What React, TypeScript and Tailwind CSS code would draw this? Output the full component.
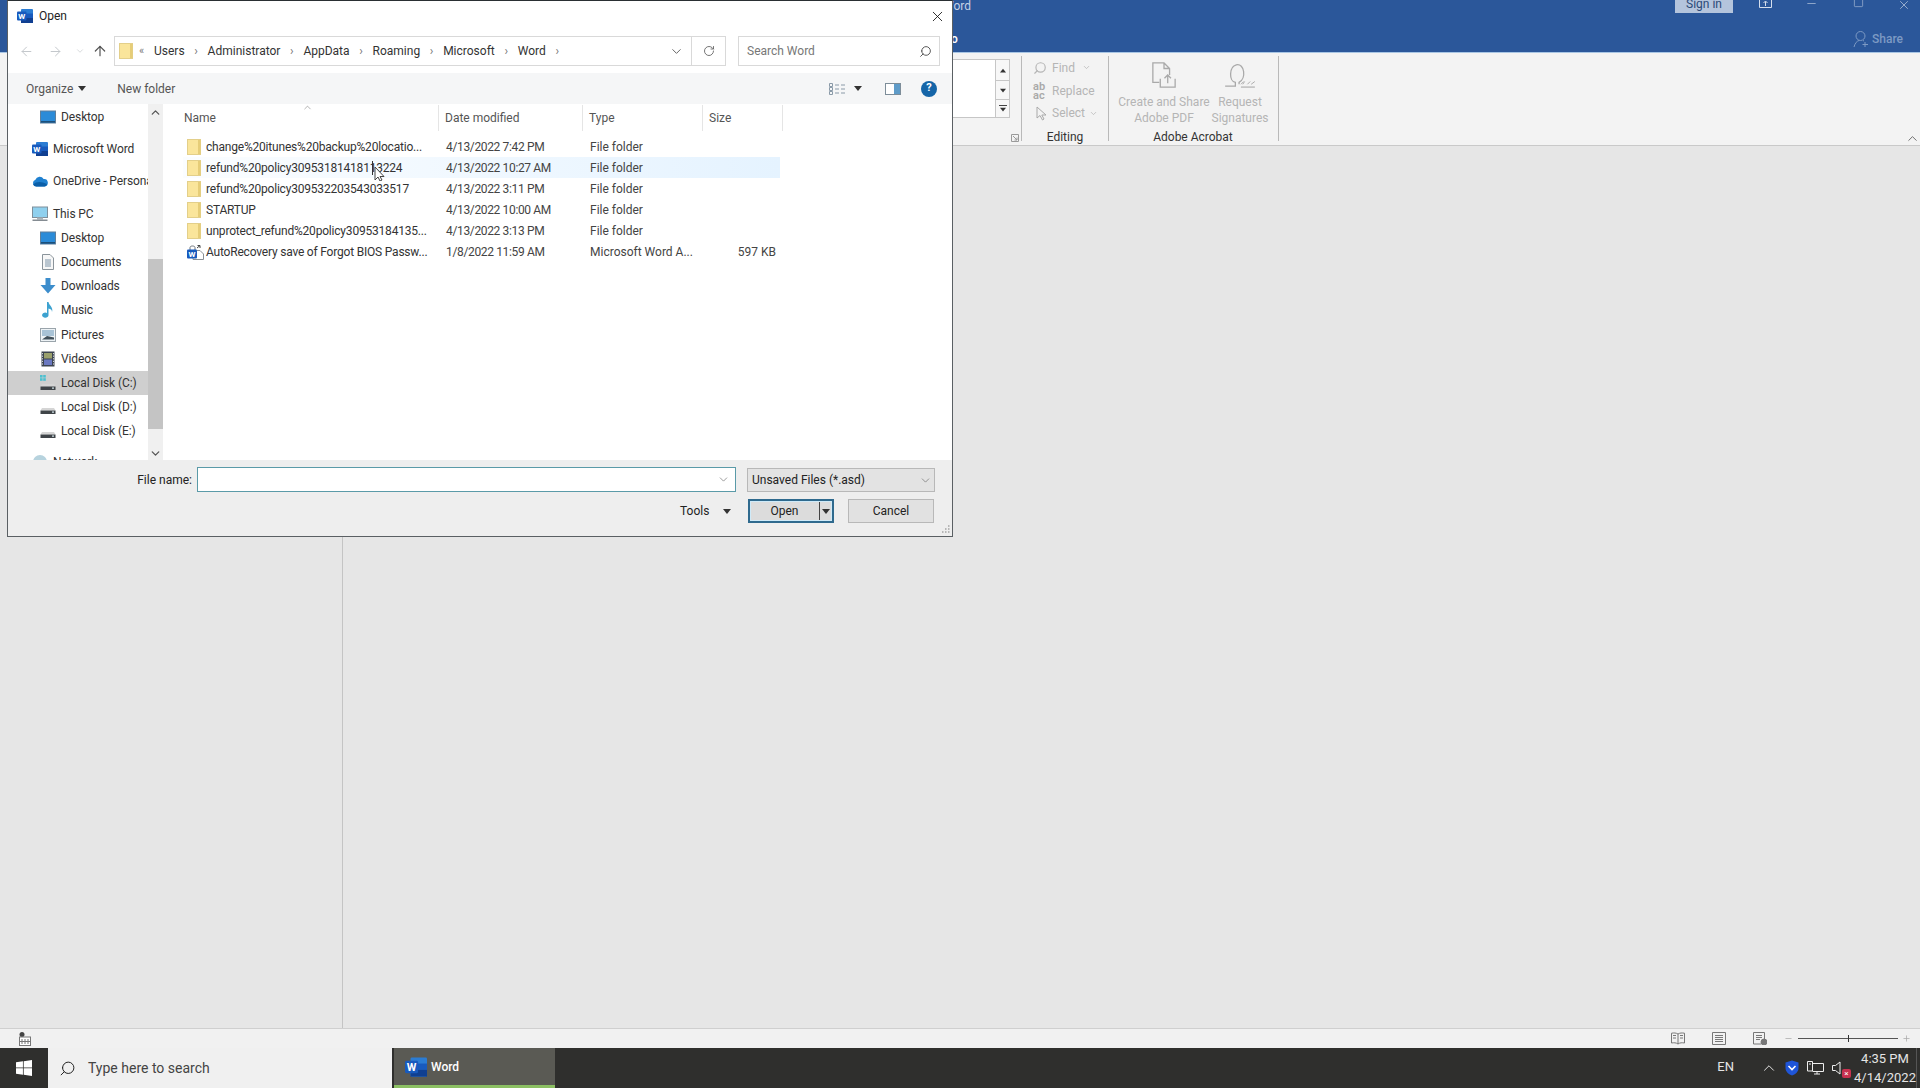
import { ArrowLeft, ArrowRight, ArrowUp, ChevronDown, ChevronUp, RotateCw, Search, X, Minus, Plus, Square } from 'lucide-react';
import type { ReactNode } from 'react';

const WordIcon = ({ size = 16 }: { size?: number }) => (
  <svg width={size} height={size} viewBox="0 0 16 16" className="shrink-0">
    <rect x="4" y="1" width="12" height="14" rx="1" fill="#2b7cd3" />
    <rect x="4" y="5.5" width="12" height="4.5" fill="#185abd" />
    <rect x="4" y="10" width="12" height="5" fill="#103f91" />
    <rect x="0" y="3.5" width="9.5" height="9" rx="1" fill="#185abd" />
    <text x="4.7" y="10.8" fontSize="8" fontWeight="700" fill="#fff" textAnchor="middle" fontFamily="Roboto, sans-serif">W</text>
  </svg>
);

const Folder = () => (
  <svg width="14" height="16" viewBox="0 0 14 16" className="shrink-0">
    <rect x="0.5" y="0.5" width="13" height="15" fill="#fae59b" stroke="#e3cf8a" />
    <rect x="11" y="1" width="2.5" height="14" fill="#e6cd78" />
  </svg>
);

const RecoveryIcon = () => (
  <svg width="17" height="16" viewBox="0 0 17 16" className="shrink-0">
    <path d="M9.5 6.5H13L16.5 10V15.5H6V12" fill="#fff" stroke="#8a8f94" />
    <path d="M10 4L13 1.5M13 1.5H10.5M13 1.5V4" fill="none" stroke="#444" />
    <path d="M3 6V3.5C3 1.5 8 1.5 8 3.5V6" fill="none" stroke="#6a7078" />
    <rect x="0" y="5.5" width="10" height="9" rx="1" fill="#185abd" />
    <text x="5" y="12.8" fontSize="8" fontWeight="700" fill="#fff" textAnchor="middle" fontFamily="Roboto, sans-serif">W</text>
  </svg>
);

const Desktop = () => (
  <svg width="16" height="14" viewBox="0 0 16 14" className="shrink-0">
    <rect x="0.5" y="1" width="15" height="12" fill="#2b8bd8" stroke="#5f7f9b" />
    <rect x="1" y="11" width="14" height="1.6" fill="#1c4f7a" />
  </svg>
);

const Disk = ({ win }: { win?: boolean }) => (
  <svg width="16" height="16" viewBox="0 0 16 16" className="shrink-0">
    {win && (
      <g fill="#4cc0d0">
        <rect x="0" y="0" width="2.6" height="2.6" />
        <rect x="3.2" y="0" width="2.6" height="2.6" />
        <rect x="0" y="3.2" width="2.6" height="2.6" />
        <rect x="3.2" y="3.2" width="2.6" height="2.6" />
      </g>
    )}
    <path d="M2 9 h12 l1.5 2.5 H0.5z" fill="#d5d5d5" />
    <rect x="0.5" y="11.5" width="15" height="3.5" fill="#3f4448" />
    <rect x="12" y="12.5" width="2" height="1.2" fill="#d8e8ee" />
  </svg>
);

const navIcons: Record<string, ReactNode> = {
  desktop: <Desktop />,
  word: <WordIcon />,
  cloud: (
    <svg width="16" height="12" viewBox="0 0 16 12" className="shrink-0">
      <path d="M4 11.5 A3.5 3.5 0 0 1 3.4 4.7 A4.5 4.5 0 0 1 11.6 4 A3.5 3.5 0 0 1 12.5 11.5z" fill="#1f80d0" />
      <path d="M1 9.5 Q6 5 15 9 Q14.5 11.5 12.5 11.5 H4 Q2 11.5 1 9.5z" fill="#0a5ea8" />
    </svg>
  ),
  pc: (
    <svg width="16" height="16" viewBox="0 0 16 16" className="shrink-0">
      <rect x="0.5" y="1" width="15" height="10.5" fill="#8fd0ee" stroke="#7e8f9b" />
      <rect x="5" y="11.5" width="6" height="2" fill="#a8b3ba" />
      <rect x="0.5" y="13.5" width="15" height="1.5" fill="#848c92" />
    </svg>
  ),
  doc: (
    <svg width="14" height="16" viewBox="0 0 14 16" className="shrink-0">
      <path d="M1.5 0.5 H9 L12.5 4 V15.5 H1.5z" fill="#f7f7f7" stroke="#8b949b" />
      <path d="M4 6h6M4 8h6M4 10h6M4 12h6" stroke="#7d94a8" />
    </svg>
  ),
  down: (
    <svg width="16" height="16" viewBox="0 0 16 16" className="shrink-0">
      <path d="M5.5 0 H10.5 V7 H15.5 L8 15.5 L0.5 7 H5.5z" fill="#3c8dcc" />
    </svg>
  ),
  music: (
    <svg width="14" height="16" viewBox="0 0 14 16" className="shrink-0">
      <path d="M6 0 H7.5 C8 3.5 12.5 5 11 10 C11 7.5 9.5 7 7.5 6.5 V13 A3.2 2.6 0 1 1 6 11z" fill="#3da2d0" />
    </svg>
  ),
  pic: (
    <svg width="16" height="14" viewBox="0 0 16 14" className="shrink-0">
      <rect x="0.5" y="0.5" width="15" height="13" fill="#eef3f6" stroke="#9aa4ab" />
      <rect x="2" y="2" width="12" height="6" fill="#a9c3d6" />
      <path d="M2 11.5 L7 8 L14 9.5 V11.5z" fill="#41505a" />
    </svg>
  ),
  video: (
    <svg width="14" height="16" viewBox="0 0 14 16" className="shrink-0">
      <rect x="0.5" y="0.5" width="13" height="15" fill="#3c4450" />
      <rect x="3" y="2" width="8" height="5.5" fill="#9aa06c" />
      <rect x="3" y="8.5" width="8" height="5.5" fill="#6a78c0" />
      <path d="M1.5 2v12M12.5 2v12" stroke="#d0d4da" strokeDasharray="1.2 1.4" />
    </svg>
  ),
  diskc: <Disk win />,
  disk: <Disk />,
  net: (
    <svg width="16" height="16" viewBox="0 0 16 16" className="shrink-0">
      <circle cx="8" cy="8" r="7" fill="#b7d3de" />
    </svg>
  ),
};

const navItems = [
  { label: 'Desktop', icon: 'desktop', indent: 'pl-[32px]', gap: '' },
  { label: 'Microsoft Word', icon: 'word', indent: 'pl-[24px]', gap: 'mt-2' },
  { label: 'OneDrive - Personal', icon: 'cloud', indent: 'pl-[24px]', gap: 'mt-2' },
  { label: 'This PC', icon: 'pc', indent: 'pl-[24px]', gap: 'mt-2' },
  { label: 'Desktop', icon: 'desktop', indent: 'pl-[32px]', gap: '' },
  { label: 'Documents', icon: 'doc', indent: 'pl-[32px]', gap: '' },
  { label: 'Downloads', icon: 'down', indent: 'pl-[32px]', gap: '' },
  { label: 'Music', icon: 'music', indent: 'pl-[32px]', gap: '' },
  { label: 'Pictures', icon: 'pic', indent: 'pl-[32px]', gap: '' },
  { label: 'Videos', icon: 'video', indent: 'pl-[32px]', gap: '' },
  { label: 'Local Disk (C:)', icon: 'diskc', indent: 'pl-[32px] bg-[#cfcfcf]', gap: '' },
  { label: 'Local Disk (D:)', icon: 'disk', indent: 'pl-[32px]', gap: '' },
  { label: 'Local Disk (E:)', icon: 'disk', indent: 'pl-[32px]', gap: '' },
  { label: 'Network', icon: 'net', indent: 'pl-[24px]', gap: 'mt-[6px]' },
];

const files = [
  { name: 'change%20itunes%20backup%20locatio...', date: '4/13/2022 7:42 PM', type: 'File folder', size: '' },
  { name: 'refund%20policy30953181418113224', date: '4/13/2022 10:27 AM', type: 'File folder', size: '', hover: true },
  { name: 'refund%20policy309532203543033517', date: '4/13/2022 3:11 PM', type: 'File folder', size: '' },
  { name: 'STARTUP', date: '4/13/2022 10:00 AM', type: 'File folder', size: '' },
  { name: 'unprotect_refund%20policy30953184135...', date: '4/13/2022 3:13 PM', type: 'File folder', size: '' },
  { name: 'AutoRecovery save of Forgot BIOS Passw...', date: '1/8/2022 11:59 AM', type: 'Microsoft Word A...', size: '597 KB', doc: true },
];

const crumbs = ['Users', 'Administrator', 'AppData', 'Roaming', 'Microsoft', 'Word'];

const Caret = ({ className = '' }: { className?: string }) => (
  <span className={`inline-block h-0 w-0 border-x-[4.5px] border-t-[5px] border-x-transparent border-t-[#333] ${className}`} />
);

function OpenDialog() {
  return (
    <div className="absolute left-[7px] top-0 flex h-[537px] w-[946px] flex-col border border-[#5a5f63] border-t-[#2a2f33] bg-white text-[12px] text-[#444]">
      {/* title */}
      <div className="flex h-[35px] shrink-0 items-center pb-[5px] pl-[9px] pr-[4px]">
        <WordIcon />
        <span className="ml-[6px] text-[#222]">Open</span>
        <X size={17} strokeWidth={1.2} className="ml-auto mr-[2px] text-[#111]" />
      </div>
      {/* address row */}
      <div className="flex h-[37px] shrink-0 items-start">
        <div className="flex h-[30px] w-[106px] shrink-0 items-center pl-[11px] text-[#c4c8cc]">
          <ArrowLeft size={15} strokeWidth={1.6} />
          <ArrowRight size={15} strokeWidth={1.6} className="ml-[14px]" />
          <ChevronDown size={10} strokeWidth={1.6} className="ml-[12px]" />
          <ArrowUp size={16} strokeWidth={1.8} className="ml-[7px] text-[#555]" />
        </div>
        <div className="flex h-[30px] w-[578px] shrink-0 items-center border border-[#d9d9d9] pl-[4px] text-[#333]">
          <Folder />
          <span className="ml-[6px] w-[15px] text-[11px] text-[#777]">«</span>
          {crumbs.map((c) => (
            <span key={c} className="flex items-center">
              <span>{c}</span>
              <span className="w-[23px] text-center text-[12px] text-[#777]">›</span>
            </span>
          ))}
          <ChevronDown size={15} strokeWidth={1.6} className="ml-auto mr-[7px] text-[#666]" />
        </div>
        <div className="flex h-[30px] w-[34px] shrink-0 items-center justify-center border border-l-0 border-[#d9d9d9] text-[#666]">
          <RotateCw size={12} strokeWidth={1.8} />
        </div>
        <div className="ml-[12px] flex h-[30px] w-[202px] shrink-0 items-center justify-between border border-[#d9d9d9] pl-[8px] pr-[7px] text-[#777]">
          <span>Search Word</span>
          <Search size={13} strokeWidth={1.8} className="-scale-x-100 text-[#555]" />
        </div>
      </div>
      {/* toolbar */}
      <div className="flex h-[31px] shrink-0 items-center bg-[#f5f6f7] pl-[18px] pr-[15px] text-[#555]">
        <span>Organize</span>
        <Caret className="ml-[5px]" />
        <span className="ml-[31px]">New folder</span>
        <svg width="17" height="12" viewBox="0 0 17 12" className="ml-auto">
          <path d="M0.5 0.5h3v3h-3zM0.5 4.5h3v3h-3zM0.5 8.5h3v3h-3z" fill="none" stroke="#8a9aa8" />
          <path d="M6 2h4M12 2h4M6 6h4M12 6h4M6 10h4M12 10h4" stroke="#8a9aa8" />
        </svg>
        <Caret className="ml-[8px]" />
        <svg width="16" height="12" viewBox="0 0 16 12" className="ml-[23px]">
          <rect x="0.5" y="0.5" width="15" height="11" fill="#fff" stroke="#7d8d99" />
          <rect x="9" y="1" width="6" height="10" fill="#5f9cc9" />
        </svg>
        <span className="ml-[20px] flex h-4 w-4 items-center justify-center rounded-full bg-[#1565a8] text-[11px] font-bold text-white">?</span>
      </div>
      {/* main */}
      <div className="flex h-[356px] shrink-0">
        <div className="h-full w-[140px] shrink-0 overflow-hidden pt-px tracking-[-0.1px] text-[#333]">
          {navItems.map((n, i) => (
            <div key={i} className={`flex h-[24.2px] items-center gap-[5px] whitespace-nowrap ${n.indent} ${n.gap}`}>
              <span className="flex w-4 shrink-0 justify-center">{navIcons[n.icon]}</span>
              <span>{n.label}</span>
            </div>
          ))}
        </div>
        <div className="flex h-full w-[15px] shrink-0 flex-col bg-[#f0f0f0]">
          <ChevronUp size={13} strokeWidth={2.4} className="mx-auto mt-[2px] text-[#555]" />
          <div className="mt-[140px] h-[170px] w-full bg-[#c4c4c4]" />
          <ChevronDown size={13} strokeWidth={2.4} className="mx-auto mt-[18px] text-[#555]" />
        </div>
        <div className="relative min-w-0 flex-1 pl-[20px] pt-px">
          <ChevronUp size={11} strokeWidth={1.2} className="absolute left-[139px] top-[-2px] text-[#777]" />
          <div className="flex h-[26px] items-center text-[#555]">
            <div className="flex h-full w-[256px] items-center border-r border-[#e5e5e5] pl-[1px]">Name</div>
            <div className="flex h-full w-[144px] items-center border-r border-[#e5e5e5] pl-[6px]">Date modified</div>
            <div className="flex h-full w-[120px] items-center border-r border-[#e5e5e5] pl-[6px]">Type</div>
            <div className="flex h-full w-[80px] items-center border-r border-[#e5e5e5] pl-[6px]">Size</div>
          </div>
          <div className="mt-[5px]">
            {files.map((f) => (
              <div key={f.name} className={`flex h-[21.1px] w-[597px] items-center whitespace-nowrap ${f.hover ? 'bg-linear-to-r from-[#fbfdff] to-[#e5f3ff]' : ''}`}>
                <div className="flex w-[257px] shrink-0 items-center pl-[4px] tracking-[-0.2px] text-[#333]">
                  {f.doc ? <RecoveryIcon /> : <Folder />}
                  <span className={f.doc ? 'ml-[2px]' : 'ml-[5px]'}>{f.name}</span>
                </div>
                <div className="w-[144px] shrink-0 pl-[6px] tracking-[-0.35px]">{f.date}</div>
                <div className="w-[120px] shrink-0 pl-[6px]">{f.type}</div>
                <div className="w-[72px] shrink-0 text-right">{f.size}</div>
              </div>
            ))}
          </div>
        </div>
      </div>
      {/* bottom band */}
      <div className="relative flex-1 bg-[#eeeeee] text-[#222]">
        <div className="flex h-[32px] items-end">
          <span className="w-[184px] pb-[3px] text-right">File name:</span>
          <div className="ml-[5px] flex h-[25px] w-[539px] items-center justify-end border border-[#5a9aa8] bg-white pr-[5px]">
            <ChevronDown size={13} strokeWidth={1.2} className="text-[#666]" />
          </div>
          <div className="ml-[11px] flex h-[24px] w-[188px] items-center justify-between border border-[#b8b8b8] bg-[#e3e3e3] pl-[4px] pr-[2px]">
            <span>Unsaved Files (*.asd)</span>
            <ChevronDown size={13} strokeWidth={1.2} className="text-[#666]" />
          </div>
        </div>
        <div className="mt-[7px] flex h-[24px] items-center">
          <span className="ml-[672px] w-[41px]">Tools</span>
          <Caret className="ml-[2px]" />
          <div className="ml-[17px] flex h-[24px] w-[86px] items-center border-2 border-[#2f6a8e] bg-[#dcdcdc] shadow-[inset_0_0_0_1px_#cfeaf8]">
            <span className="w-[69px] text-center">Open</span>
            <span className="h-[18px] w-px bg-[#444]" />
            <Caret className="ml-[2px] border-t-[#111]" />
          </div>
          <div className="ml-[14px] flex h-[24px] w-[86px] items-center justify-center border border-[#b8b8b8] bg-[#e1e1e1]">Cancel</div>
        </div>
        <svg width="10" height="10" viewBox="0 0 10 10" className="absolute bottom-[1px] right-[1px]">
          <path d="M7 1h1.5M4 4h1.5M7 4h1.5M1 7h1.5M4 7h1.5M7 7h1.5" stroke="#a5a5a5" strokeWidth="1.5" />
        </svg>
      </div>
    </div>
  );
}

function RibbonBackground() {
  return (
    <div className="flex h-[93px] shrink-0 items-start border-b border-[#c9c9c9] bg-[#f3f3f3] pt-[3px] text-[12px]">
      <div className="w-[953px] shrink-0" />
      {/* styles gallery */}
      <div className="relative h-[85px] w-[69px] shrink-0 border-r border-[#b9b9b9]">
        <div className="mt-[3px] flex h-[59px] w-[57px] border-y border-r border-[#c6c6c6] bg-white">
          <div className="ml-auto flex w-[14px] flex-col border-l border-[#c6c6c6] bg-[#f7f7f7] text-[#555]">
            <span className="flex h-[21px] items-center justify-center border-b border-[#c6c6c6]"><Caret className="rotate-180 scale-75" /></span>
            <span className="flex h-[19px] items-center justify-center border-b border-[#c6c6c6]"><Caret className="scale-75" /></span>
            <span className="flex flex-1 flex-col items-center justify-center"><span className="mb-[1px] h-px w-[8px] bg-[#444]" /><Caret className="scale-75" /></span>
          </div>
        </div>
        <svg width="8" height="8" viewBox="0 0 8 8" fill="none" stroke="#9a9a9a" className="absolute bottom-[-1px] right-[2px]"><path d="M.5 7.5V.5H7.5V7.5zM2 2 6 6M6 3.5V6H3.5" /></svg>
      </div>
      {/* editing */}
      <div className="flex h-[85px] w-[87px] shrink-0 flex-col border-r border-[#b9b9b9] pl-[11px] text-[#b5b5b5]">
        <div className="flex h-[23px] shrink-0 items-center gap-[5px]"><Search size={14} className="-scale-x-100" /><span>Find</span><ChevronDown size={9} className="ml-[2px]" /></div>
        <div className="flex h-[23px] shrink-0 items-center gap-[3px]"><span className="w-[16px] text-[11px] font-semibold leading-[9px] text-[#a9a9a9]">ab<br />ac</span><span>Replace</span></div>
        <div className="flex h-[22px] shrink-0 items-center gap-[4px] pl-[3px]">
          <svg width="12" height="15" viewBox="0 0 12 15"><path d="M1 1 V12 L4 9.5 L6.5 14 L8 13 L5.8 9 L10 9z" fill="none" stroke="#a9a9a9" /></svg>
          <span>Select</span><ChevronDown size={9} />
        </div>
        <span className="mt-[5px] h-[16px] shrink-0 pr-[11px] text-center leading-[16px] text-[#333]">Editing</span>
      </div>
      {/* acrobat */}
      <div className="flex h-[85px] w-[170px] shrink-0 flex-col border-r border-[#b9b9b9] text-[#b5b5b5]">
        <div className="flex h-[73px] shrink-0 whitespace-nowrap leading-[16px]">
          <div className="flex w-[110px] shrink-0 flex-col items-center pt-[6px]">
            <svg width="26" height="26" viewBox="0 0 26 28" fill="none" stroke="#a9a9a9" strokeWidth="1.4">
              <path d="M8 22H1V1H13L19 7V14M13 1V7H19" />
              <path d="M9 18V27H25V18M17 23V14M13.5 17.5L17 14L20.5 17.5" />
            </svg>
            <span className="mt-[6px]">Create and Share</span>
            <span>Adobe PDF</span>
          </div>
          <div className="flex w-[42px] shrink-0 flex-col items-center pt-[6px]">
            <svg width="34" height="26" viewBox="0 0 34 28" fill="none" stroke="#a9a9a9" strokeWidth="1.4" className="shrink-0">
              <path d="M1 26H12V22C5 21 5 5 13 3C22 1 24 18 16 22V24" />
              <path d="M18 27H33" strokeWidth="1.2" />
              <path d="M18 24L21 21M20 24L22 21M25 24L28 21M29 24L33 21" strokeWidth="1" />
            </svg>
            <span className="mt-[6px]">Request</span>
            <span>Signatures</span>
          </div>
        </div>
        <span className="h-[16px] shrink-0 pr-[1px] text-center leading-[16px] text-[#333]">Adobe Acrobat</span>
      </div>
      <div className="flex h-[90px] flex-1 items-end justify-end">
        <ChevronUp size={15} strokeWidth={1.2} className="text-[#444]" />
      </div>
    </div>
  );
}

export default function App() {
  return (
    <div className="relative flex h-[1088px] w-[1920px] flex-col overflow-hidden bg-[#e6e6e6] font-['Roboto',sans-serif]">
      {/* word title bar */}
      <div className="flex h-[53px] shrink-0 flex-col overflow-hidden border-b border-[#a9c6e4] bg-[#2b579a] text-[12px] text-[#c5d2e6]">
        <div className="flex h-[26px] items-start pr-[9px]">
          <span className="ml-[943px] mt-[-3px]">Word</span>
          <span className="ml-auto mt-[-12px] flex h-[25px] w-[58px] items-center justify-center bg-[#b4c4dc] pt-[6px] text-[#2b4a78]">Sign in</span>
          <svg width="13" height="9" viewBox="0 0 13 9" fill="none" stroke="#d5deec" className="ml-[26px]"><path d="M0.5 0V7.5H12.5V0M6.5 6V1.5M4.5 3L6.5 1L8.5 3" /></svg>
          <Minus size={13} strokeWidth={1} className="ml-[33px] mt-[-3px] text-[#e3e9f2]" />
          <Square size={11} strokeWidth={1} className="ml-[35px] mt-[-3px] text-[#e3e9f2]" />
          <X size={14} strokeWidth={1} className="ml-[33px] mt-[-2px] text-[#e3e9f2]" />
        </div>
        <div className="flex h-[26px] items-center pr-[17px]">
          <span className="ml-[951px] font-medium text-white">o</span>
          <svg width="16" height="18" viewBox="0 0 16 18" fill="none" stroke="#7d9ac4" className="ml-auto"><circle cx="7.5" cy="6" r="4.5" /><path d="M1 17C2 13 4 11 6 10.5M10 10.5L11 11M12 12V17M9.5 14.5H15" /></svg>
          <span className="ml-[3px] font-medium text-[#7d9ac4]">Share</span>
        </div>
      </div>

      <RibbonBackground />

      {/* document area */}
      <div className="flex min-h-0 flex-1">
        <div className="h-full w-[343px] border-r border-[#c4c4c4]" />
      </div>

      {/* status bar */}
      <div className="flex h-[20px] shrink-0 items-center border-t border-[#cfcfcf] bg-[#f1f1f1] text-[#777]">
        <svg width="12" height="14" viewBox="0 0 12 14" className="ml-[19px]"><circle cx="3" cy="2.5" r="2.5" fill="#444" /><rect x="0.5" y="5" width="11" height="8.5" fill="#fff" stroke="#777" /><path d="M3 7v5M6 7v5M9 7v5M1 9.5h10" stroke="#777" /></svg>
        <svg width="14" height="13" viewBox="0 0 14 13" fill="none" stroke="#777" className="ml-[1640px]"><path d="M7 2C5 .8 3 .8 .5 1.2V11C3 10.6 5 10.6 7 12C9 10.6 11 10.6 13.5 11V1.2C11 .8 9 .8 7 2V12M2 3.5H5M2 6H5M9 3.5H12M9 6H12" /></svg>
        <svg width="14" height="13" viewBox="0 0 14 13" fill="none" stroke="#777" className="ml-[27px]"><path d="M.5.5H13.5V12.5H.5zM3 3.5H11M3 5.5H11M3 7.5H11M3 9.5H11" /></svg>
        <svg width="14" height="13" viewBox="0 0 14 13" fill="none" stroke="#777" className="ml-[27px]"><path d="M.5.5H11.5V9M.5.5V12H8M3 3.5H9M3 5.5H9M3 7.5H7" /><circle cx="11" cy="10" r="3" fill="#777" /></svg>
        <Minus size={9} className="ml-[17px] text-[#aaa]" />
        <div className="relative ml-[5px] h-px w-[100px] bg-[#555]">
          <span className="absolute left-[50px] top-[-3px] h-[7px] w-px bg-[#333]" />
        </div>
        <Plus size={9} className="ml-[4px] text-[#aaa]" />
      </div>

      {/* taskbar */}
      <div className="flex h-[40px] shrink-0 items-stretch bg-[#2f2f2d] text-[#e5e5e5]">
        <div className="flex w-[48px] shrink-0 items-center justify-center">
          <svg width="16" height="16" viewBox="0 0 15 15" fill="#fff"><path d="M0 2.2 6.5 1.2V7H0zM7.2 1.1 15 0V7H7.2zM0 7.8H6.5V13.8L0 12.8zM7.2 7.8H15V15L7.2 13.9z" /></svg>
        </div>
        <div className="flex w-[344px] shrink-0 items-center bg-[#f0f0f0] pl-[11px] text-[14px] text-[#444]">
          <Search size={17} strokeWidth={1.4} className="-scale-x-100 text-[#222]" />
          <span className="ml-[12px]">Type here to search</span>
        </div>
        <div className="ml-[2px] flex w-[161px] shrink-0 items-center gap-[3px] border-b-[3px] border-[#8cc063] bg-[#5a5a54] pl-[11px] text-[12px] font-medium text-white">
          <WordIcon size={22} />
          <span className="ml-[1px]">Word</span>
        </div>
        <div className="ml-auto mr-[3px] flex items-center border-r border-[#555] pr-[3px]">
          <span className="mb-[2px] text-[13px]">EN</span>
          <ChevronUp size={18} strokeWidth={1.3} className="ml-[26px]" />
          <svg width="14" height="16" viewBox="0 0 14 16" className="ml-[7px]"><path d="M7 0.5 13.5 2.5V8C13.5 12 10 14.5 7 15.5C4 14.5 .5 12 .5 8V2.5z" fill="#1f55d8" /><path d="M3.5 6 7 9.5 10.5 6" fill="none" stroke="#fff" strokeWidth="1.6" /></svg>
          <svg width="17" height="14" viewBox="0 0 17 14" fill="none" stroke="#eee" className="ml-[8px]"><path d="M.5.5H5.5V10H.5zM5.5 2.5H16.5V10.5H5.5M2 3H4M10 10.5V13M7 13H13" /></svg>
          <span className="relative ml-[8px] flex h-[14px] w-[18px]">
            <svg width="11" height="14" viewBox="0 0 11 14" fill="none" stroke="#eee"><path d="M.5 4.5H3.5L8 1V13L3.5 9.5H.5z" /></svg>
            <span className="absolute bottom-[-3px] right-[-1px] flex h-[9px] w-[9px] items-center justify-center rounded-[2px] bg-[#c8314f] text-[8px] leading-none text-white">×</span>
          </span>
          <div className="ml-[7px] flex w-[56px] flex-col items-center text-[13px] leading-[19px]">
            <span>4:35 PM</span>
            <span>4/14/2022</span>
          </div>
        </div>
      </div>

      <OpenDialog />

      {/* mouse pointer over the second row */}
      <svg width="14" height="20" viewBox="0 0 14 20" className="absolute left-[371px] top-[161px]">
        <path d="M1.5 0v14" stroke="#333" />
        <path d="M4 6V19L7 16 9 20 11 19 9 15.5H13z" fill="#fff" stroke="#444" />
      </svg>
    </div>
  );
}
